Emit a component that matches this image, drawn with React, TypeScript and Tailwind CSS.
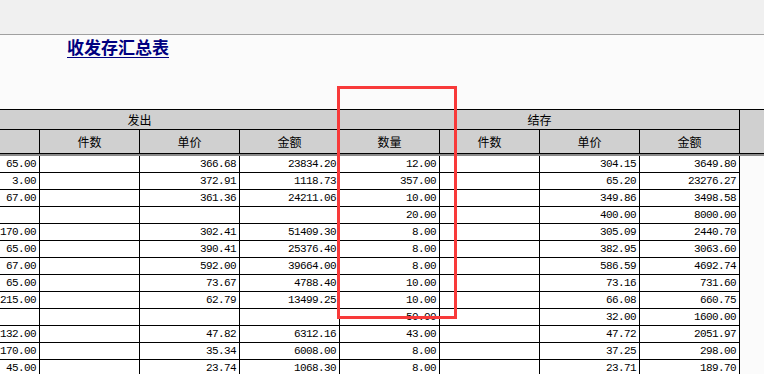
const rows: string[][] = [
  ['65.00', '', '366.68', '23834.20', '12.00', '', '304.15', '3649.80'],
  ['3.00', '', '372.91', '1118.73', '357.00', '', '65.20', '23276.27'],
  ['67.00', '', '361.36', '24211.06', '10.00', '', '349.86', '3498.58'],
  ['', '', '', '', '20.00', '', '400.00', '8000.00'],
  ['170.00', '', '302.41', '51409.30', '8.00', '', '305.09', '2440.70'],
  ['65.00', '', '390.41', '25376.40', '8.00', '', '382.95', '3063.60'],
  ['67.00', '', '592.00', '39664.00', '8.00', '', '586.59', '4692.74'],
  ['65.00', '', '73.67', '4788.40', '10.00', '', '73.16', '731.60'],
  ['215.00', '', '62.79', '13499.25', '10.00', '', '66.08', '660.75'],
  ['', '', '', '', '50.00', '', '32.00', '1600.00'],
  ['132.00', '', '47.82', '6312.16', '43.00', '', '47.72', '2051.97'],
  ['170.00', '', '35.34', '6008.00', '8.00', '', '37.25', '298.00'],
  ['45.00', '', '23.74', '1068.30', '8.00', '', '23.71', '189.70'],
];

// first column header is scrolled out of view, so it stays blank
const subHeads = ['', '件数', '单价', '金额', '数量', '件数', '单价', '金额'];

const cjk = { fontFamily: '"Noto Sans CJK SC", "Noto Sans", sans-serif' };
const mono = { fontFamily: '"Liberation Mono", "DejaVu Sans Mono", monospace' };

export default function App() {
  return (
    <div className="relative w-[764px] h-[374px] overflow-hidden bg-[#fbfbfb]">
      {/* toolbar strip */}
      <div className="h-[35px] bg-[#f0f0f0] border-b border-[#a0a0a0]" />

      {/* report title */}
      <div className="h-[74px] pl-[67px] pt-[1px]">
        <span
          className="text-[17px] leading-[20px] font-bold text-[#000080] underline underline-offset-[3px]"
          style={cjk}
        >
          收发存汇总表
        </span>
      </div>

      {/* table, scrolled left by 60px */}
      <div className="ml-[-60px] border-t border-black">
        <div className="flex">
          <div>
            <div className="flex h-[20px] bg-[#d0d0d0] text-[12px] text-black" style={cjk}>
              <div className="w-[400px] border-r border-b border-black flex items-center justify-center">发出</div>
              <div className="w-[400px] border-r border-b border-black flex items-center justify-center">结存</div>
            </div>
            <div className="grid grid-cols-[repeat(8,100px)] h-[24px] bg-[#d0d0d0] text-[12px] text-black" style={cjk}>
              {subHeads.map((h, i) => (
                <div key={i} className="border-r border-b border-black flex items-center justify-center">
                  {h}
                </div>
              ))}
            </div>
          </div>
          <div className="flex-1 h-[44px] bg-[#d0d0d0] border-b border-black" />
        </div>
        <div className="h-[2px] bg-[#8a8a8a]" />

        <div className="grid grid-cols-[repeat(8,100px)] w-[800px] bg-white">
          {rows.map((r, ri) =>
            r.map((v, ci) => (
              <div
                key={`${ri}-${ci}`}
                className="h-[17px] border-r border-b border-black flex items-center justify-end pr-[3px] text-[11px] tracking-[-0.6px] text-black"
                style={mono}
              >
                {v}
              </div>
            ))
          )}
        </div>
      </div>

      {/* red highlight annotation */}
      <div className="absolute left-[337px] top-[86px] w-[120px] h-[233px] border-[3px] border-[#f83a3a]" />
    </div>
  );
}
